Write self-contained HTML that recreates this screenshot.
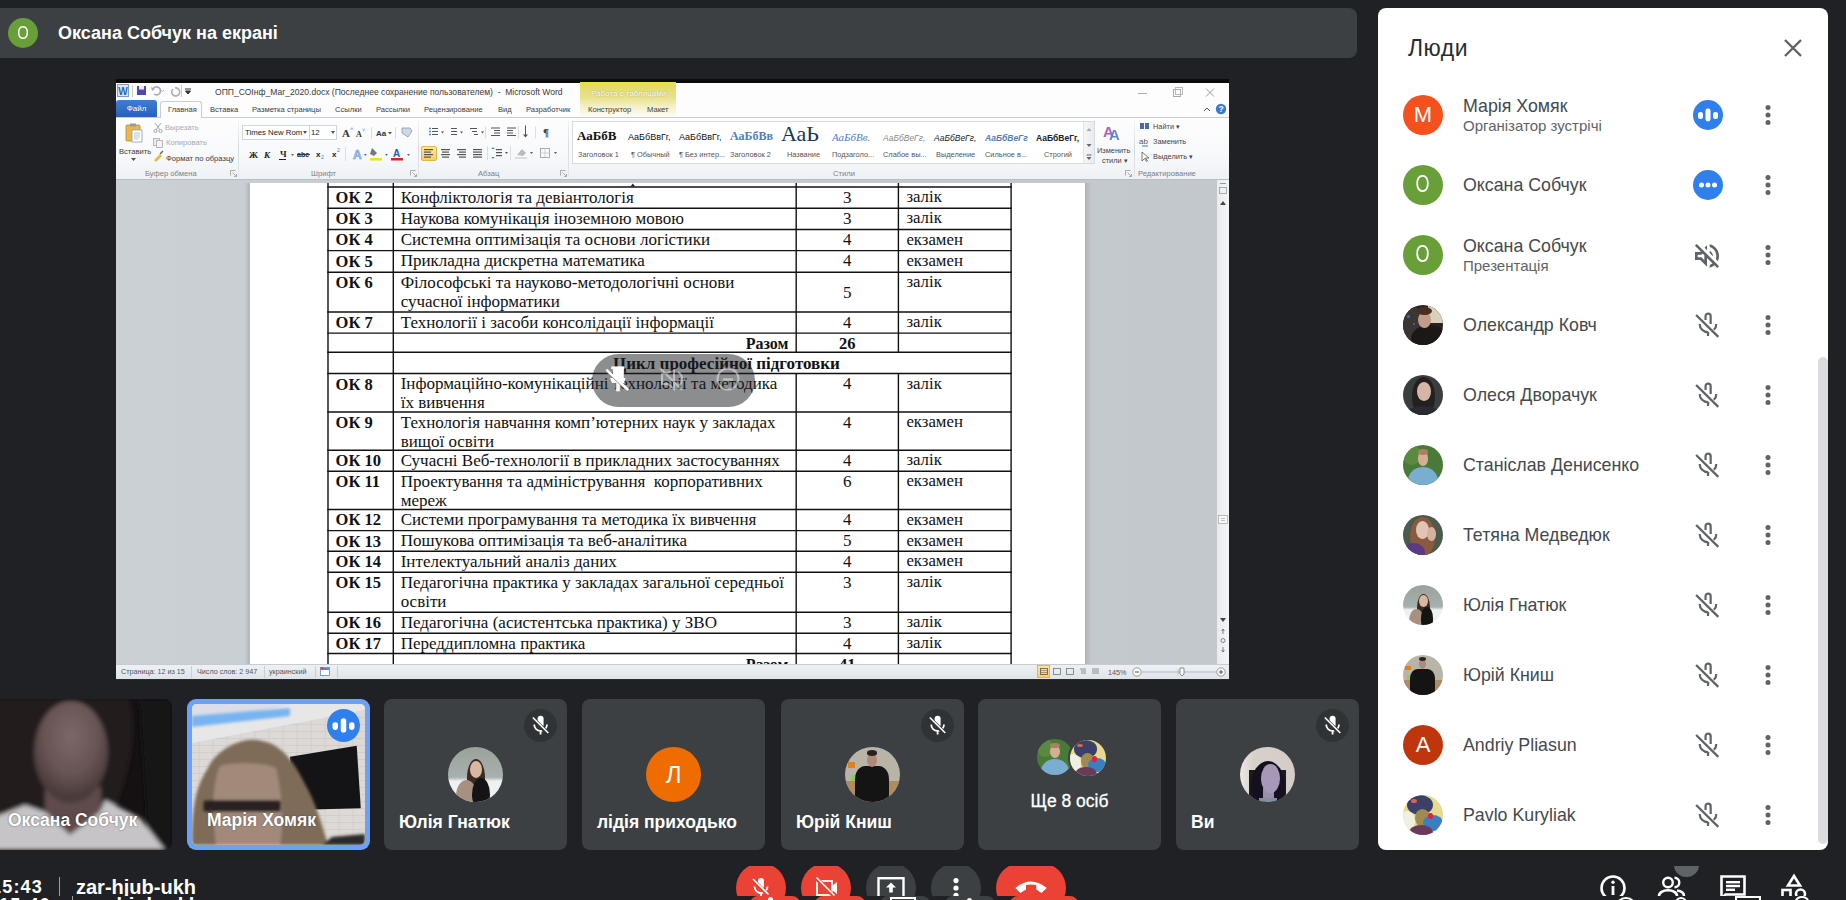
<!DOCTYPE html>
<html><head><meta charset="utf-8">
<style>
*{margin:0;padding:0;box-sizing:border-box}
html,body{width:1846px;height:900px;overflow:hidden;background:#202124;font-family:"Liberation Sans",sans-serif}
body{position:relative}
.a{position:absolute}
.nw{white-space:nowrap}
</style></head><body>
<div class="a" style="left:-10px;top:8px;width:1367px;height:50px;background:#3c4043;border-radius:8px"></div>
<div class="a" style="left:8px;top:18px;width:30px;height:30px;border-radius:50%;background:#689f38;color:#fff;font-size:18px;line-height:30px;text-align:center"><span style="display:inline-block;transform:scale(0.82,1.06)">O</span></div>
<div class="a nw" style="left:58px;top:22px;color:#fff;font-size:18px;font-weight:bold;line-height:22px">Оксана Собчук на екрані</div>
<div class="a" style="left:116px;top:79px;width:1113px;height:600px;background:#c9ced3"></div>
<div class="a" style="left:116px;top:79px;width:1113px;height:4px;background:#0b0b0b"></div>
<div class="a" style="left:116px;top:83px;width:1113px;height:34px;background:#fdfdfd"></div>
<div class="a" style="left:580px;top:82px;width:96px;height:35px;background:linear-gradient(#efe22a 0,#e4da68 10%,#e8e28e 45%,#f4f0c8 70%,#fdfdf8 100%)"></div>
<div class="a nw" style="left:591px;top:88px;font-family:&quot;Liberation Sans&quot;,sans-serif;font-size:8px;line-height:12px;color:#fff;text-shadow:0 0 1.5px rgba(90,90,40,.6)">Работа с таблицами</div>
<svg class="a" style="left:117px;top:84px" width="80" height="14" viewBox="0 0 80 14"><rect x="0.5" y="0.5" width="11" height="12" fill="#dfe8f4" stroke="#7a9cc8"/><text x="1.2" y="11" font-family="Liberation Sans" font-weight="bold" font-size="10" fill="#2a64b8">W</text><line x1="15.5" y1="1" x2="15.5" y2="13" stroke="#ccc"/><rect x="20" y="2" width="9" height="9" fill="#4a4ab0"/><rect x="22" y="2" width="5" height="3.5" fill="#e8e8f8"/><path d="M36 5a4 4 0 1 1 1 5" fill="none" stroke="#aab" stroke-width="1.6"/><path d="M34 3l1 4 3-2z" fill="#aab"/><path d="M44 6l1.5 1.5L47 6" fill="none" stroke="#bbb"/><path d="M58 4a4 4 0 1 1-2 1" fill="none" stroke="#aab" stroke-width="1.6"/><line x1="64.5" y1="1" x2="64.5" y2="13" stroke="#ccc"/><path d="M68 5h6M68.5 7h5l-2.5 3z" stroke="#333" fill="#333" stroke-width="1"/></svg>
<div class="a nw" style="left:215px;top:86px;font-family:&quot;Liberation Sans&quot;,sans-serif;font-size:8.55px;line-height:12px;color:#3a3a3a">ОПП_СОІнф_Маг_2020.docx (Последнее сохранение пользователем)&nbsp; - &nbsp;Microsoft Word</div>
<svg class="a" style="left:1135px;top:86px" width="85" height="14" viewBox="0 0 85 14"><line x1="3" y1="7.5" x2="12" y2="7.5" stroke="#aaa" stroke-width="1"/><rect x="38.5" y="3.5" width="7" height="7" fill="none" stroke="#aaa"/><rect x="40.5" y="1.5" width="7" height="7" fill="none" stroke="#bbb"/><path d="M71 2.5l8 8M79 2.5l-8 8" stroke="#999" stroke-width="1"/></svg>
<div class="a" style="left:116px;top:100px;width:41px;height:17px;background:linear-gradient(#3c7fd4,#2a60b8);border-radius:3px 3px 0 0"></div>
<div class="a nw" style="left:116px;top:103px;font-family:&quot;Liberation Sans&quot;,sans-serif;font-size:8px;line-height:11px;color:#fff;width:41px;text-align:center">Файл</div>
<div class="a" style="left:116px;top:117px;width:1113px;height:1px;background:#c6cdd5"></div>
<div class="a" style="left:160px;top:101px;width:42px;height:17px;background:#fdfdfd;border:1px solid #c6cdd5;border-bottom:none;border-radius:3px 3px 0 0"></div>
<div class="a nw" style="left:168px;top:104px;font-family:&quot;Liberation Sans&quot;,sans-serif;font-size:7.6px;line-height:11px;color:#3c3c3c">Главная</div>
<div class="a nw" style="left:210px;top:104px;font-family:&quot;Liberation Sans&quot;,sans-serif;font-size:7.6px;line-height:11px;color:#3c3c3c">Вставка</div>
<div class="a nw" style="left:252px;top:104px;font-family:&quot;Liberation Sans&quot;,sans-serif;font-size:7.6px;line-height:11px;color:#3c3c3c">Разметка страницы</div>
<div class="a nw" style="left:335px;top:104px;font-family:&quot;Liberation Sans&quot;,sans-serif;font-size:7.6px;line-height:11px;color:#3c3c3c">Ссылки</div>
<div class="a nw" style="left:376px;top:104px;font-family:&quot;Liberation Sans&quot;,sans-serif;font-size:7.6px;line-height:11px;color:#3c3c3c">Рассылки</div>
<div class="a nw" style="left:424px;top:104px;font-family:&quot;Liberation Sans&quot;,sans-serif;font-size:7.6px;line-height:11px;color:#3c3c3c">Рецензирование</div>
<div class="a nw" style="left:498px;top:104px;font-family:&quot;Liberation Sans&quot;,sans-serif;font-size:7.6px;line-height:11px;color:#3c3c3c">Вид</div>
<div class="a nw" style="left:526px;top:104px;font-family:&quot;Liberation Sans&quot;,sans-serif;font-size:7.6px;line-height:11px;color:#3c3c3c">Разработчик</div>
<div class="a nw" style="left:588px;top:104px;font-family:&quot;Liberation Sans&quot;,sans-serif;font-size:7.6px;line-height:11px;color:#3c3c3c">Конструктор</div>
<div class="a nw" style="left:647px;top:104px;font-family:&quot;Liberation Sans&quot;,sans-serif;font-size:7.6px;line-height:11px;color:#3c3c3c">Макет</div>
<svg class="a" style="left:1200px;top:102px" width="28" height="14" viewBox="0 0 28 14"><path d="M4 9l3-3 3 3" fill="none" stroke="#555" stroke-width="1"/><circle cx="21" cy="7" r="5.2" fill="#3a78d0"/><text x="18.6" y="10.2" font-family="Liberation Sans" font-weight="bold" font-size="8.5" fill="#fff">?</text></svg>
<div class="a" style="left:116px;top:118px;width:1113px;height:61px;background:linear-gradient(#fdfdfd 0,#f8f9fb 60%,#eef1f5 100%)"></div>
<div class="a" style="left:116px;top:179px;width:1113px;height:1px;background:#b6bec7"></div>
<div class="a" style="left:238px;top:120px;width:1px;height:57px;background:linear-gradient(#f4f5f7,#d6dbe0 50%,#e4e7eb)"></div>
<div class="a" style="left:418px;top:120px;width:1px;height:57px;background:linear-gradient(#f4f5f7,#d6dbe0 50%,#e4e7eb)"></div>
<div class="a" style="left:568px;top:120px;width:1px;height:57px;background:linear-gradient(#f4f5f7,#d6dbe0 50%,#e4e7eb)"></div>
<div class="a" style="left:1134px;top:120px;width:1px;height:57px;background:linear-gradient(#f4f5f7,#d6dbe0 50%,#e4e7eb)"></div>
<div class="a nw" style="left:145px;top:168px;font-family:&quot;Liberation Sans&quot;,sans-serif;font-size:7.6px;line-height:11px;color:#7a7f85">Буфер обмена</div>
<div class="a nw" style="left:311px;top:168px;font-family:&quot;Liberation Sans&quot;,sans-serif;font-size:7.6px;line-height:11px;color:#7a7f85">Шрифт</div>
<div class="a nw" style="left:478px;top:168px;font-family:&quot;Liberation Sans&quot;,sans-serif;font-size:7.6px;line-height:11px;color:#7a7f85">Абзац</div>
<div class="a nw" style="left:833px;top:168px;font-family:&quot;Liberation Sans&quot;,sans-serif;font-size:7.6px;line-height:11px;color:#7a7f85">Стили</div>
<div class="a nw" style="left:1138px;top:168px;font-family:&quot;Liberation Sans&quot;,sans-serif;font-size:7.6px;line-height:11px;color:#7a7f85">Редактирование</div>
<svg class="a" style="left:230px;top:170px" width="7" height="7" viewBox="0 0 7 7"><path d="M0.5 0.5h5M0.5 0.5v5M2.5 2.5l4 4M4 6.5h2.5V4" fill="none" stroke="#999" stroke-width="0.8"/></svg>
<svg class="a" style="left:410px;top:170px" width="7" height="7" viewBox="0 0 7 7"><path d="M0.5 0.5h5M0.5 0.5v5M2.5 2.5l4 4M4 6.5h2.5V4" fill="none" stroke="#999" stroke-width="0.8"/></svg>
<svg class="a" style="left:560px;top:170px" width="7" height="7" viewBox="0 0 7 7"><path d="M0.5 0.5h5M0.5 0.5v5M2.5 2.5l4 4M4 6.5h2.5V4" fill="none" stroke="#999" stroke-width="0.8"/></svg>
<svg class="a" style="left:1125px;top:170px" width="7" height="7" viewBox="0 0 7 7"><path d="M0.5 0.5h5M0.5 0.5v5M2.5 2.5l4 4M4 6.5h2.5V4" fill="none" stroke="#999" stroke-width="0.8"/></svg>
<svg class="a" style="left:124px;top:122px" width="22" height="22" viewBox="0 0 22 22"><rect x="2" y="3" width="14" height="16" rx="1" fill="#e8b850" stroke="#b88a30" stroke-width="0.8"/><rect x="6" y="1.5" width="6" height="3" fill="#999"/><rect x="8" y="8" width="10" height="12" fill="#fff" stroke="#8aa0b8" stroke-width="0.8"/><path d="M10 11h6M10 13h6M10 15h6M10 17h4" stroke="#9ab" stroke-width="0.7"/></svg>
<div class="a nw" style="left:119px;top:146px;font-family:&quot;Liberation Sans&quot;,sans-serif;font-size:7.6px;line-height:11px;color:#3c3c3c">Вставить</div>
<svg class="a" style="left:131px;top:158px" width="6" height="4"><path d="M0 0h5l-2.5 3z" fill="#555"/></svg>
<svg class="a" style="left:152px;top:122px" width="12" height="40" viewBox="0 0 12 40"><path d="M3 1l5 7M9 1L4 8" stroke="#aaa" stroke-width="1"/><circle cx="3.5" cy="9" r="1.6" fill="none" stroke="#aaa"/><circle cx="8.5" cy="9" r="1.6" fill="none" stroke="#aaa"/><rect x="1.5" y="16.5" width="6" height="7" fill="#eee" stroke="#aaa" stroke-width="0.8"/><rect x="4.5" y="18.5" width="6" height="7" fill="#f4f4f4" stroke="#aaa" stroke-width="0.8"/><path d="M2 38l6-6 2 2-6 6z" fill="#e0c040"/><path d="M8 32l3-3" stroke="#666" stroke-width="1.5"/></svg>
<div class="a nw" style="left:165px;top:122px;font-family:&quot;Liberation Sans&quot;,sans-serif;font-size:7.6px;line-height:11px;color:#a8abb0">Вырезать</div>
<div class="a nw" style="left:166px;top:137px;font-family:&quot;Liberation Sans&quot;,sans-serif;font-size:7.6px;line-height:11px;color:#a8abb0">Копировать</div>
<div class="a nw" style="left:166px;top:153px;font-family:&quot;Liberation Sans&quot;,sans-serif;font-size:7.6px;line-height:11px;color:#3c3c3c">Формат по образцу</div>
<div class="a" style="left:242px;top:125px;width:68px;height:15px;background:#fff;border:1px solid #cfd5dc"></div>
<div class="a" style="left:309px;top:125px;width:28px;height:15px;background:#fff;border:1px solid #cfd5dc"></div>
<div class="a nw" style="left:245px;top:127px;font-family:&quot;Liberation Sans&quot;,sans-serif;font-size:7.8px;line-height:11px;color:#222">Times New Rom</div>
<div class="a nw" style="left:311px;top:127px;font-family:&quot;Liberation Sans&quot;,sans-serif;font-size:7.8px;line-height:11px;color:#222">12</div>
<svg class="a" style="left:303px;top:131px" width="5" height="3"><path d="M0 0h4l-2 3z" fill="#555"/></svg>
<svg class="a" style="left:331px;top:131px" width="5" height="3"><path d="M0 0h4l-2 3z" fill="#555"/></svg>
<svg class="a" style="left:240px;top:124px" width="180" height="40" viewBox="0 0 180 40"><text x="102" y="13" font-family="Liberation Serif" font-weight="bold" font-size="11" fill="#333">A</text><text x="110" y="7" font-size="6" fill="#3a78d0">˄</text><text x="116" y="13" font-family="Liberation Serif" font-weight="bold" font-size="8" fill="#333">A</text><text x="122" y="8" font-size="5" fill="#3a78d0">˅</text><line x1="131.5" y1="3" x2="131.5" y2="15" stroke="#ddd"/><text x="136" y="12" font-family="Liberation Sans" font-weight="bold" font-size="8" fill="#333">Aa</text><path d="M148 8h4l-2 2.5z" fill="#555"/><line x1="155.5" y1="3" x2="155.5" y2="15" stroke="#ddd"/><path d="M162 4h8l2 3-4 6-6-4z" fill="#d0d8e8" stroke="#8898b0" stroke-width="0.8"/><text x="9" y="34" font-family="Liberation Serif" font-weight="bold" font-size="9" fill="#222">Ж</text><text x="24" y="34" font-family="Liberation Serif" font-weight="bold" font-style="italic" font-size="9" fill="#222">К</text><text x="40" y="33" font-family="Liberation Serif" font-weight="bold" font-size="9" fill="#222">Ч</text><line x1="39" y1="35.5" x2="46" y2="35.5" stroke="#222"/><path d="M51 30h3l-1.5 2z" fill="#666"/><text x="57" y="33" font-family="Liberation Sans" font-weight="bold" font-size="7" fill="#222">abc</text><line x1="57" y1="30.5" x2="70" y2="30.5" stroke="#222" stroke-width="0.8"/><text x="76" y="33" font-family="Liberation Sans" font-weight="bold" font-size="8" fill="#222">x</text><text x="81" y="35" font-size="5" fill="#3a78d0">2</text><text x="92" y="33" font-family="Liberation Sans" font-weight="bold" font-size="8" fill="#222">x</text><text x="97" y="28" font-size="5" fill="#3a78d0">2</text><line x1="105.5" y1="23" x2="105.5" y2="37" stroke="#ddd"/><text x="113" y="35" font-family="Liberation Sans" font-weight="bold" font-size="12" fill="#a8c8f0" stroke="#5a90d0" stroke-width="0.5">A</text><path d="M124 30h3l-1.5 2z" fill="#666"/><path d="M132 24l5 5-3 3-4-2z" fill="#777"/><rect x="130" y="34" width="12" height="2.5" fill="#f0e020"/><path d="M145 30h3l-1.5 2z" fill="#666"/><text x="153" y="33" font-family="Liberation Sans" font-weight="bold" font-size="10" fill="#2a58b0">A</text><rect x="151" y="34" width="12" height="2.5" fill="#e02020"/><path d="M167 30h3l-1.5 2z" fill="#666"/></svg>
<div class="a" style="left:421px;top:146px;width:16px;height:15px;background:linear-gradient(#fde89a,#f8d060);border:1px solid #e0b840;border-radius:2px"></div>
<svg class="a" style="left:420px;top:122px" width="150" height="42" viewBox="0 0 150 42"><g transform="translate(0,1.5)"><g fill="#555"><circle cx="10" cy="5" r="0.9" fill="#3a78d0"/><circle cx="10" cy="8" r="0.9" fill="#3a78d0"/><circle cx="10" cy="11" r="0.9" fill="#3a78d0"/><rect x="12" y="4.5" width="6" height="1"/><rect x="12" y="7.5" width="6" height="1"/><rect x="12" y="10.5" width="6" height="1"/><path d="M21 8h3l-1.5 2z"/><rect x="31" y="4.5" width="6" height="1"/><rect x="31" y="7.5" width="6" height="1"/><rect x="31" y="10.5" width="6" height="1"/><path d="M40 8h3l-1.5 2z"/><rect x="50" y="4.5" width="7" height="1"/><rect x="52" y="7.5" width="5" height="1"/><rect x="54" y="10.5" width="4" height="1"/><path d="M61 8h3l-1.5 2z"/><rect x="71" y="4" width="9" height="1"/><rect x="74" y="6.5" width="6" height="1"/><rect x="74" y="9" width="6" height="1"/><rect x="71" y="11.5" width="9" height="1"/><rect x="87" y="4" width="9" height="1"/><rect x="87" y="6.5" width="6" height="1"/><rect x="87" y="9" width="6" height="1"/><rect x="87" y="11.5" width="9" height="1"/><rect x="105" y="2" width="1" height="11"/><path d="M103 11h5l-2.5 3z"/><text x="123" y="12" font-family="Liberation Serif" font-weight="bold" font-size="11" fill="#444">¶</text></g><line x1="65.5" y1="3" x2="65.5" y2="15" stroke="#ddd"/><line x1="98.5" y1="3" x2="98.5" y2="15" stroke="#ddd"/><line x1="115.5" y1="3" x2="115.5" y2="15" stroke="#ddd"/></g><g fill="#555"><rect x="4" y="27" width="9" height="1.2"/><rect x="4" y="29.5" width="7" height="1.2"/><rect x="4" y="32" width="9" height="1.2"/><rect x="4" y="34.5" width="7" height="1.2"/><rect x="21" y="27" width="9" height="1.2"/><rect x="22" y="29.5" width="7" height="1.2"/><rect x="21" y="32" width="9" height="1.2"/><rect x="22" y="34.5" width="7" height="1.2"/><rect x="37" y="27" width="9" height="1.2"/><rect x="39" y="29.5" width="7" height="1.2"/><rect x="37" y="32" width="9" height="1.2"/><rect x="39" y="34.5" width="7" height="1.2"/><rect x="53" y="27" width="9" height="1.2"/><rect x="53" y="29.5" width="9" height="1.2"/><rect x="53" y="32" width="9" height="1.2"/><rect x="53" y="34.5" width="9" height="1.2"/><rect x="76" y="27" width="6" height="1.2"/><rect x="76" y="30" width="6" height="1.2"/><rect x="76" y="33" width="6" height="1.2"/><path d="M73 25l-1.5 2h3zM73 37l-1.5-2h3z" fill="#3a78d0"/><path d="M85 30h3l-1.5 2z"/><path d="M97 33l5-6 4 4-3 3z" fill="#bbb"/><rect x="95" y="35" width="12" height="2" fill="#ddd"/><path d="M110 30h3l-1.5 2z"/><rect x="120.5" y="26.5" width="9" height="9" fill="none" stroke="#999" stroke-width="0.8"/><line x1="125" y1="26.5" x2="125" y2="35.5" stroke="#bbb" stroke-width="0.6"/><line x1="120.5" y1="31" x2="129.5" y2="31" stroke="#bbb" stroke-width="0.6"/><path d="M134 30h3l-1.5 2z"/></g><line x1="67.5" y1="24" x2="67.5" y2="38" stroke="#ddd"/><line x1="90.5" y1="24" x2="90.5" y2="38" stroke="#ddd"/></svg>
<div class="a" style="left:572px;top:121px;width:523px;height:43px;background:#fff;border:1px solid #d6dbe1"></div>
<div class="a" style="left:1083px;top:122px;width:11px;height:41px;background:linear-gradient(90deg,#f4f5f7,#e8ebef);border-left:1px solid #e0e3e7"></div>
<svg class="a" style="left:1085px;top:125px" width="8" height="36"><path d="M1.5 6h5L4 3z" fill="#aaa"/><path d="M1.5 19h5L4 22z" fill="#666"/><line x1="1.5" y1="30" x2="6.5" y2="30" stroke="#666"/><path d="M1.5 32h5L4 35z" fill="#666"/></svg>
<div class="a nw" style="left:577px;top:129px;font-family:&quot;Liberation Serif&quot;;font-weight:bold;font-size:13px;color:#111;line-height:14px">АаБбВ</div>
<div class="a nw" style="left:578px;top:149px;font-family:&quot;Liberation Sans&quot;,sans-serif;font-size:7.4px;line-height:11px;color:#555">Заголовок 1</div>
<div class="a nw" style="left:628px;top:130px;font-family:&quot;Liberation Sans&quot;,sans-serif;font-size:9px;color:#111;line-height:14px">АаБбВвГг,</div>
<div class="a nw" style="left:631px;top:149px;font-family:&quot;Liberation Sans&quot;,sans-serif;font-size:7.4px;line-height:11px;color:#555">¶ Обычный</div>
<div class="a nw" style="left:679px;top:130px;font-family:&quot;Liberation Sans&quot;,sans-serif;font-size:9px;color:#111;line-height:14px">АаБбВвГг,</div>
<div class="a nw" style="left:679px;top:149px;font-family:&quot;Liberation Sans&quot;,sans-serif;font-size:7.4px;line-height:11px;color:#555">¶ Без интер...</div>
<div class="a nw" style="left:730px;top:129px;font-family:&quot;Liberation Serif&quot;;font-weight:bold;font-size:12px;color:#4f81bd;line-height:14px">АаБбВв</div>
<div class="a nw" style="left:730px;top:149px;font-family:&quot;Liberation Sans&quot;,sans-serif;font-size:7.4px;line-height:11px;color:#555">Заголовок 2</div>
<div class="a nw" style="left:781px;top:119px;font-family:&quot;Liberation Serif&quot;;font-size:22px;color:#17365d;line-height:30px">АаЬ</div>
<div class="a nw" style="left:787px;top:149px;font-family:&quot;Liberation Sans&quot;,sans-serif;font-size:7.4px;line-height:11px;color:#555">Название</div>
<div class="a nw" style="left:832px;top:130px;font-family:&quot;Liberation Serif&quot;;font-style:italic;font-size:11px;color:#4f81bd;line-height:14px">АаБбВв.</div>
<div class="a nw" style="left:832px;top:149px;font-family:&quot;Liberation Sans&quot;,sans-serif;font-size:7.4px;line-height:11px;color:#555">Подзаголо...</div>
<div class="a nw" style="left:883px;top:131px;font-family:&quot;Liberation Sans&quot;,sans-serif;font-style:italic;font-size:8.5px;color:#8a8a8a;line-height:14px">АаБбВеГг,</div>
<div class="a nw" style="left:883px;top:149px;font-family:&quot;Liberation Sans&quot;,sans-serif;font-size:7.4px;line-height:11px;color:#555">Слабое вы...</div>
<div class="a nw" style="left:934px;top:131px;font-family:&quot;Liberation Sans&quot;,sans-serif;font-style:italic;font-size:8.5px;color:#222;line-height:14px">АаБбВеГг,</div>
<div class="a nw" style="left:936px;top:149px;font-family:&quot;Liberation Sans&quot;,sans-serif;font-size:7.4px;line-height:11px;color:#555">Выделение</div>
<div class="a nw" style="left:985px;top:131px;font-family:&quot;Liberation Sans&quot;,sans-serif;font-style:italic;font-weight:bold;font-size:8.5px;color:#4f81bd;line-height:14px">АаБбВеГг</div>
<div class="a nw" style="left:985px;top:149px;font-family:&quot;Liberation Sans&quot;,sans-serif;font-size:7.4px;line-height:11px;color:#555">Сильное в...</div>
<div class="a nw" style="left:1036px;top:131px;font-family:&quot;Liberation Sans&quot;,sans-serif;font-weight:bold;font-size:8.5px;color:#222;line-height:14px">АаБбВеГг,</div>
<div class="a nw" style="left:1044px;top:149px;font-family:&quot;Liberation Sans&quot;,sans-serif;font-size:7.4px;line-height:11px;color:#555">Строгий</div>
<svg class="a" style="left:1102px;top:122px" width="22" height="20" viewBox="0 0 22 20"><text x="1" y="15" font-family="Liberation Sans" font-weight="bold" font-size="15" fill="#b060c0">A</text><text x="7" y="18" font-family="Liberation Sans" font-weight="bold" font-size="15" fill="#4a80d0" opacity="0.9">A</text></svg>
<div class="a nw" style="left:1097px;top:146px;font-family:&quot;Liberation Sans&quot;,sans-serif;font-size:7.4px;line-height:10px;color:#444">Изменить</div>
<div class="a nw" style="left:1102px;top:156px;font-family:&quot;Liberation Sans&quot;,sans-serif;font-size:7.4px;line-height:10px;color:#444">стили ▾</div>
<svg class="a" style="left:1139px;top:122px" width="12" height="42" viewBox="0 0 12 42"><rect x="1" y="1" width="4" height="6" fill="#4a6ab0"/><rect x="6" y="1" width="4" height="6" fill="#4a6ab0"/><text x="0" y="22" font-family="Liberation Sans" font-size="8" fill="#555">ab</text><path d="M3 24h6" stroke="#3a78d0"/><path d="M3 30v9l2.5-2.5 2 3 1-0.5-2-3H10z" fill="#fff" stroke="#444" stroke-width="0.7"/></svg>
<div class="a nw" style="left:1153px;top:121px;font-family:&quot;Liberation Sans&quot;,sans-serif;font-size:7.4px;line-height:11px;color:#444">Найти ▾</div>
<div class="a nw" style="left:1153px;top:136px;font-family:&quot;Liberation Sans&quot;,sans-serif;font-size:7.4px;line-height:11px;color:#444">Заменить</div>
<div class="a nw" style="left:1153px;top:151px;font-family:&quot;Liberation Sans&quot;,sans-serif;font-size:7.4px;line-height:11px;color:#444">Выделить ▾</div>
<div class="a" style="left:116px;top:180px;width:1101px;height:484px;background:linear-gradient(90deg,#cbd0d5 0,#c6cbd0 50%,#c3c8cd 100%)"></div>
<div class="a" style="left:244px;top:183px;width:6px;height:481px;background:linear-gradient(90deg,rgba(0,0,0,0),rgba(0,0,0,0.12))"></div>
<div class="a" style="left:1085px;top:183px;width:6px;height:481px;background:linear-gradient(90deg,rgba(0,0,0,0.12),rgba(0,0,0,0))"></div>
<div class="a" style="left:1217px;top:180px;width:12px;height:484px;background:linear-gradient(90deg,#e9ecef,#f4f5f7)"></div>
<svg class="a" style="left:1217px;top:181px" width="12" height="483" viewBox="0 0 12 483"><line x1="3" y1="2.5" x2="9" y2="2.5" stroke="#999"/><rect x="2.5" y="6.5" width="7" height="6" fill="none" stroke="#999" stroke-width="0.8"/><path d="M3 24h6L6 20z" fill="#444"/><rect x="1.5" y="334.5" width="9" height="8" fill="#f8f8f8" stroke="#aaa" stroke-width="0.8"/><path d="M4 337.5h4M4 339.5h4" stroke="#999" stroke-width="0.6"/><path d="M3 437h6L6 441z" fill="#444"/><path d="M6 448v5M4.5 450l1.5-2 1.5 2" fill="none" stroke="#666" stroke-width="0.8"/><circle cx="6" cy="459.5" r="2" fill="none" stroke="#666" stroke-width="0.8"/><path d="M6 466v5M4.5 469l1.5 2 1.5-2" fill="none" stroke="#666" stroke-width="0.8"/></svg>
<div class="a" style="left:250px;top:183px;width:835px;height:481px;background:#fff"></div>
<div class="a" style="left:250px;top:183px;width:835px;height:481px;overflow:hidden">
<svg class="a" style="left:0;top:0" width="835" height="481"><g stroke="#111"><line x1="77.30000000000001" y1="3.90" x2="761.8000000000001" y2="3.90" stroke-width="1.45"/><line x1="77.30000000000001" y1="25.30" x2="761.8000000000001" y2="25.30" stroke-width="1.45"/><line x1="77.30000000000001" y1="46.40" x2="761.8000000000001" y2="46.40" stroke-width="1.45"/><line x1="77.30000000000001" y1="67.60" x2="761.8000000000001" y2="67.60" stroke-width="1.45"/><line x1="77.30000000000001" y1="89.20" x2="761.8000000000001" y2="89.20" stroke-width="1.45"/><line x1="77.30000000000001" y1="129.00" x2="761.8000000000001" y2="129.00" stroke-width="1.45"/><line x1="77.30000000000001" y1="150.10" x2="761.8000000000001" y2="150.10" stroke-width="1.45"/><line x1="77.30000000000001" y1="169.20" x2="761.8000000000001" y2="169.20" stroke-width="1.45"/><line x1="77.30000000000001" y1="190.50" x2="761.8000000000001" y2="190.50" stroke-width="1.45"/><line x1="77.30000000000001" y1="228.90" x2="761.8000000000001" y2="228.90" stroke-width="1.45"/><line x1="77.30000000000001" y1="267.20" x2="761.8000000000001" y2="267.20" stroke-width="1.45"/><line x1="77.30000000000001" y1="288.30" x2="761.8000000000001" y2="288.30" stroke-width="1.45"/><line x1="77.30000000000001" y1="326.40" x2="761.8000000000001" y2="326.40" stroke-width="1.45"/><line x1="77.30000000000001" y1="347.60" x2="761.8000000000001" y2="347.60" stroke-width="1.45"/><line x1="77.30000000000001" y1="368.20" x2="761.8000000000001" y2="368.20" stroke-width="1.45"/><line x1="77.30000000000001" y1="389.30" x2="761.8000000000001" y2="389.30" stroke-width="1.45"/><line x1="77.30000000000001" y1="429.30" x2="761.8000000000001" y2="429.30" stroke-width="1.45"/><line x1="77.30000000000001" y1="450.30" x2="761.8000000000001" y2="450.30" stroke-width="1.45"/><line x1="77.30000000000001" y1="470.50" x2="761.8000000000001" y2="470.50" stroke-width="1.45"/><line x1="78.00" y1="0" x2="78.00" y2="481" stroke-width="1.4"/><line x1="761.10" y1="0" x2="761.10" y2="481" stroke-width="1.4"/><line x1="143.30" y1="0" x2="143.30" y2="481" stroke-width="1.4"/><line x1="546.20" y1="0" x2="546.20" y2="169.2" stroke-width="1.4"/><line x1="546.20" y1="190.5" x2="546.20" y2="481" stroke-width="1.4"/><line x1="648.40" y1="0" x2="648.40" y2="169.2" stroke-width="1.4"/><line x1="648.40" y1="190.5" x2="648.40" y2="481" stroke-width="1.4"/></g></svg>
<div class="a nw" style="left:85.60px;top:4.93px;font-family:&quot;Liberation Serif&quot;,serif;font-size:16.5px;line-height:20px;color:#111;font-weight:bold;">ОК 2</div>
<div class="a nw" style="left:150.70px;top:4.76px;font-family:&quot;Liberation Serif&quot;,serif;font-size:17px;line-height:20px;color:#111;">Конфліктологія та девіантологія</div>
<div class="a nw" style="left:546.20px;top:4.76px;font-family:&quot;Liberation Serif&quot;,serif;font-size:17px;line-height:20px;color:#111;width:102.19999999999993px;text-align:center;">3</div>
<div class="a nw" style="left:656.40px;top:4.03px;font-family:&quot;Liberation Serif&quot;,serif;font-size:16.8px;line-height:20px;color:#111;">залік</div>
<div class="a nw" style="left:85.60px;top:26.33px;font-family:&quot;Liberation Serif&quot;,serif;font-size:16.5px;line-height:20px;color:#111;font-weight:bold;">ОК 3</div>
<div class="a nw" style="left:150.70px;top:26.16px;font-family:&quot;Liberation Serif&quot;,serif;font-size:17px;line-height:20px;color:#111;">Наукова комунікація іноземною мовою</div>
<div class="a nw" style="left:546.20px;top:26.16px;font-family:&quot;Liberation Serif&quot;,serif;font-size:17px;line-height:20px;color:#111;width:102.19999999999993px;text-align:center;">3</div>
<div class="a nw" style="left:656.40px;top:25.43px;font-family:&quot;Liberation Serif&quot;,serif;font-size:16.8px;line-height:20px;color:#111;">залік</div>
<div class="a nw" style="left:85.60px;top:47.43px;font-family:&quot;Liberation Serif&quot;,serif;font-size:16.5px;line-height:20px;color:#111;font-weight:bold;">ОК 4</div>
<div class="a nw" style="left:150.70px;top:47.26px;font-family:&quot;Liberation Serif&quot;,serif;font-size:17px;line-height:20px;color:#111;">Системна оптимізація та основи логістики</div>
<div class="a nw" style="left:546.20px;top:47.26px;font-family:&quot;Liberation Serif&quot;,serif;font-size:17px;line-height:20px;color:#111;width:102.19999999999993px;text-align:center;">4</div>
<div class="a nw" style="left:656.40px;top:46.53px;font-family:&quot;Liberation Serif&quot;,serif;font-size:16.8px;line-height:20px;color:#111;">екзамен</div>
<div class="a nw" style="left:85.60px;top:68.63px;font-family:&quot;Liberation Serif&quot;,serif;font-size:16.5px;line-height:20px;color:#111;font-weight:bold;">ОК 5</div>
<div class="a nw" style="left:150.70px;top:68.46px;font-family:&quot;Liberation Serif&quot;,serif;font-size:17px;line-height:20px;color:#111;">Прикладна дискретна математика</div>
<div class="a nw" style="left:546.20px;top:68.46px;font-family:&quot;Liberation Serif&quot;,serif;font-size:17px;line-height:20px;color:#111;width:102.19999999999993px;text-align:center;">4</div>
<div class="a nw" style="left:656.40px;top:67.73px;font-family:&quot;Liberation Serif&quot;,serif;font-size:16.8px;line-height:20px;color:#111;">екзамен</div>
<div class="a nw" style="left:85.60px;top:90.23px;font-family:&quot;Liberation Serif&quot;,serif;font-size:16.5px;line-height:20px;color:#111;font-weight:bold;">ОК 6</div>
<div class="a nw" style="left:150.70px;top:90.06px;font-family:&quot;Liberation Serif&quot;,serif;font-size:17px;line-height:20px;color:#111;">Філософські та науково-методологічні основи</div>
<div class="a nw" style="left:150.70px;top:108.96px;font-family:&quot;Liberation Serif&quot;,serif;font-size:17px;line-height:20px;color:#111;">сучасної інформатики</div>
<div class="a nw" style="left:546.20px;top:99.51px;font-family:&quot;Liberation Serif&quot;,serif;font-size:17px;line-height:20px;color:#111;width:102.19999999999993px;text-align:center;">5</div>
<div class="a nw" style="left:656.40px;top:89.33px;font-family:&quot;Liberation Serif&quot;,serif;font-size:16.8px;line-height:20px;color:#111;">залік</div>
<div class="a nw" style="left:85.60px;top:130.03px;font-family:&quot;Liberation Serif&quot;,serif;font-size:16.5px;line-height:20px;color:#111;font-weight:bold;">ОК 7</div>
<div class="a nw" style="left:150.70px;top:129.86px;font-family:&quot;Liberation Serif&quot;,serif;font-size:17px;line-height:20px;color:#111;">Технології і засоби консолідації інформації</div>
<div class="a nw" style="left:546.20px;top:129.86px;font-family:&quot;Liberation Serif&quot;,serif;font-size:17px;line-height:20px;color:#111;width:102.19999999999993px;text-align:center;">4</div>
<div class="a nw" style="left:656.40px;top:129.13px;font-family:&quot;Liberation Serif&quot;,serif;font-size:16.8px;line-height:20px;color:#111;">залік</div>
<div class="a nw" style="left:85.60px;top:191.53px;font-family:&quot;Liberation Serif&quot;,serif;font-size:16.5px;line-height:20px;color:#111;font-weight:bold;">ОК 8</div>
<div class="a nw" style="left:150.70px;top:191.36px;font-family:&quot;Liberation Serif&quot;,serif;font-size:17px;line-height:20px;color:#111;">Інформаційно-комунікаційні технології та методика</div>
<div class="a nw" style="left:150.70px;top:210.26px;font-family:&quot;Liberation Serif&quot;,serif;font-size:17px;line-height:20px;color:#111;">їх вивчення</div>
<div class="a nw" style="left:546.20px;top:191.36px;font-family:&quot;Liberation Serif&quot;,serif;font-size:17px;line-height:20px;color:#111;width:102.19999999999993px;text-align:center;">4</div>
<div class="a nw" style="left:656.40px;top:190.63px;font-family:&quot;Liberation Serif&quot;,serif;font-size:16.8px;line-height:20px;color:#111;">залік</div>
<div class="a nw" style="left:85.60px;top:229.93px;font-family:&quot;Liberation Serif&quot;,serif;font-size:16.5px;line-height:20px;color:#111;font-weight:bold;">ОК 9</div>
<div class="a nw" style="left:150.70px;top:229.76px;font-family:&quot;Liberation Serif&quot;,serif;font-size:17px;line-height:20px;color:#111;">Технологія навчання комп’ютерних наук у закладах</div>
<div class="a nw" style="left:150.70px;top:248.66px;font-family:&quot;Liberation Serif&quot;,serif;font-size:17px;line-height:20px;color:#111;">вищої освіти</div>
<div class="a nw" style="left:546.20px;top:229.76px;font-family:&quot;Liberation Serif&quot;,serif;font-size:17px;line-height:20px;color:#111;width:102.19999999999993px;text-align:center;">4</div>
<div class="a nw" style="left:656.40px;top:229.03px;font-family:&quot;Liberation Serif&quot;,serif;font-size:16.8px;line-height:20px;color:#111;">екзамен</div>
<div class="a nw" style="left:85.60px;top:268.23px;font-family:&quot;Liberation Serif&quot;,serif;font-size:16.5px;line-height:20px;color:#111;font-weight:bold;">ОК 10</div>
<div class="a nw" style="left:150.70px;top:268.06px;font-family:&quot;Liberation Serif&quot;,serif;font-size:17px;line-height:20px;color:#111;">Сучасні Веб-технології в прикладних застосуваннях</div>
<div class="a nw" style="left:546.20px;top:268.06px;font-family:&quot;Liberation Serif&quot;,serif;font-size:17px;line-height:20px;color:#111;width:102.19999999999993px;text-align:center;">4</div>
<div class="a nw" style="left:656.40px;top:267.33px;font-family:&quot;Liberation Serif&quot;,serif;font-size:16.8px;line-height:20px;color:#111;">залік</div>
<div class="a nw" style="left:85.60px;top:289.33px;font-family:&quot;Liberation Serif&quot;,serif;font-size:16.5px;line-height:20px;color:#111;font-weight:bold;">ОК 11</div>
<div class="a nw" style="left:150.70px;top:289.16px;font-family:&quot;Liberation Serif&quot;,serif;font-size:17px;line-height:20px;color:#111;">Проектування та адміністрування&nbsp; корпоративних</div>
<div class="a nw" style="left:150.70px;top:308.06px;font-family:&quot;Liberation Serif&quot;,serif;font-size:17px;line-height:20px;color:#111;">мереж</div>
<div class="a nw" style="left:546.20px;top:289.16px;font-family:&quot;Liberation Serif&quot;,serif;font-size:17px;line-height:20px;color:#111;width:102.19999999999993px;text-align:center;">6</div>
<div class="a nw" style="left:656.40px;top:288.43px;font-family:&quot;Liberation Serif&quot;,serif;font-size:16.8px;line-height:20px;color:#111;">екзамен</div>
<div class="a nw" style="left:85.60px;top:327.43px;font-family:&quot;Liberation Serif&quot;,serif;font-size:16.5px;line-height:20px;color:#111;font-weight:bold;">ОК 12</div>
<div class="a nw" style="left:150.70px;top:327.26px;font-family:&quot;Liberation Serif&quot;,serif;font-size:17px;line-height:20px;color:#111;">Системи програмування та методика їх вивчення</div>
<div class="a nw" style="left:546.20px;top:327.26px;font-family:&quot;Liberation Serif&quot;,serif;font-size:17px;line-height:20px;color:#111;width:102.19999999999993px;text-align:center;">4</div>
<div class="a nw" style="left:656.40px;top:326.53px;font-family:&quot;Liberation Serif&quot;,serif;font-size:16.8px;line-height:20px;color:#111;">екзамен</div>
<div class="a nw" style="left:85.60px;top:348.63px;font-family:&quot;Liberation Serif&quot;,serif;font-size:16.5px;line-height:20px;color:#111;font-weight:bold;">ОК 13</div>
<div class="a nw" style="left:150.70px;top:348.46px;font-family:&quot;Liberation Serif&quot;,serif;font-size:17px;line-height:20px;color:#111;">Пошукова оптимізація та веб-аналітика</div>
<div class="a nw" style="left:546.20px;top:348.46px;font-family:&quot;Liberation Serif&quot;,serif;font-size:17px;line-height:20px;color:#111;width:102.19999999999993px;text-align:center;">5</div>
<div class="a nw" style="left:656.40px;top:347.73px;font-family:&quot;Liberation Serif&quot;,serif;font-size:16.8px;line-height:20px;color:#111;">екзамен</div>
<div class="a nw" style="left:85.60px;top:369.23px;font-family:&quot;Liberation Serif&quot;,serif;font-size:16.5px;line-height:20px;color:#111;font-weight:bold;">ОК 14</div>
<div class="a nw" style="left:150.70px;top:369.06px;font-family:&quot;Liberation Serif&quot;,serif;font-size:17px;line-height:20px;color:#111;">Інтелектуальний аналіз даних</div>
<div class="a nw" style="left:546.20px;top:369.06px;font-family:&quot;Liberation Serif&quot;,serif;font-size:17px;line-height:20px;color:#111;width:102.19999999999993px;text-align:center;">4</div>
<div class="a nw" style="left:656.40px;top:368.33px;font-family:&quot;Liberation Serif&quot;,serif;font-size:16.8px;line-height:20px;color:#111;">екзамен</div>
<div class="a nw" style="left:85.60px;top:390.33px;font-family:&quot;Liberation Serif&quot;,serif;font-size:16.5px;line-height:20px;color:#111;font-weight:bold;">ОК 15</div>
<div class="a nw" style="left:150.70px;top:390.16px;font-family:&quot;Liberation Serif&quot;,serif;font-size:17px;line-height:20px;color:#111;">Педагогічна практика у закладах загальної середньої</div>
<div class="a nw" style="left:150.70px;top:409.06px;font-family:&quot;Liberation Serif&quot;,serif;font-size:17px;line-height:20px;color:#111;">освіти</div>
<div class="a nw" style="left:546.20px;top:390.16px;font-family:&quot;Liberation Serif&quot;,serif;font-size:17px;line-height:20px;color:#111;width:102.19999999999993px;text-align:center;">3</div>
<div class="a nw" style="left:656.40px;top:389.43px;font-family:&quot;Liberation Serif&quot;,serif;font-size:16.8px;line-height:20px;color:#111;">залік</div>
<div class="a nw" style="left:85.60px;top:430.33px;font-family:&quot;Liberation Serif&quot;,serif;font-size:16.5px;line-height:20px;color:#111;font-weight:bold;">ОК 16</div>
<div class="a nw" style="left:150.70px;top:430.16px;font-family:&quot;Liberation Serif&quot;,serif;font-size:17px;line-height:20px;color:#111;">Педагогічна (асистентська практика) у ЗВО</div>
<div class="a nw" style="left:546.20px;top:430.16px;font-family:&quot;Liberation Serif&quot;,serif;font-size:17px;line-height:20px;color:#111;width:102.19999999999993px;text-align:center;">3</div>
<div class="a nw" style="left:656.40px;top:429.43px;font-family:&quot;Liberation Serif&quot;,serif;font-size:16.8px;line-height:20px;color:#111;">залік</div>
<div class="a nw" style="left:85.60px;top:451.33px;font-family:&quot;Liberation Serif&quot;,serif;font-size:16.5px;line-height:20px;color:#111;font-weight:bold;">ОК 17</div>
<div class="a nw" style="left:150.70px;top:451.16px;font-family:&quot;Liberation Serif&quot;,serif;font-size:17px;line-height:20px;color:#111;">Переддипломна практика</div>
<div class="a nw" style="left:546.20px;top:451.16px;font-family:&quot;Liberation Serif&quot;,serif;font-size:17px;line-height:20px;color:#111;width:102.19999999999993px;text-align:center;">4</div>
<div class="a nw" style="left:656.40px;top:450.43px;font-family:&quot;Liberation Serif&quot;,serif;font-size:16.8px;line-height:20px;color:#111;">залік</div>
<div class="a nw" style="left:143.30px;top:151.30px;font-family:&quot;Liberation Serif&quot;,serif;font-size:16px;line-height:20px;color:#111;font-weight:bold;width:395.09999999999997px;text-align:right;">Разом</div>
<div class="a nw" style="left:546.20px;top:151.13px;font-family:&quot;Liberation Serif&quot;,serif;font-size:16.5px;line-height:20px;color:#111;font-weight:bold;width:102.19999999999993px;text-align:center;">26</div>
<div class="a nw" style="left:363.00px;top:171.26px;font-family:&quot;Liberation Serif&quot;,serif;font-size:17px;line-height:20px;color:#111;font-weight:bold;">Цикл професійної підготовки</div>
<svg class="a" style="left:380px;top:0" width="6" height="4"><path d="M0.5 3.5L2.8 0.5L5.2 3.5z" fill="#222"/></svg>
<div class="a nw" style="left:143.30px;top:471.70px;font-family:&quot;Liberation Serif&quot;,serif;font-size:16px;line-height:20px;color:#111;font-weight:bold;width:395.09999999999997px;text-align:right;">Разом</div>
<div class="a nw" style="left:546.20px;top:471.53px;font-family:&quot;Liberation Serif&quot;,serif;font-size:16.5px;line-height:20px;color:#111;font-weight:bold;width:102.19999999999993px;text-align:center;">41</div>
</div>
<div class="a" style="left:592px;top:353.7px;width:163px;height:53px;background:rgba(28,30,33,0.505);border-radius:26.5px"></div>
<svg class="a" style="left:600px;top:362px" width="150" height="34" viewBox="0 0 150 34"><g fill="#fff"><rect x="11.3" y="4.4" width="13" height="2.8"/><rect x="13" y="7" width="10.8" height="9.2"/><path d="M10 16H25.6L24 21H12z"/><rect x="16.2" y="21" width="3.6" height="8.3"/></g><line x1="6" y1="8.6" x2="27.8" y2="29" stroke="#8c8d8f" stroke-width="2"/><line x1="6.4" y1="7.6" x2="28.2" y2="28" stroke="#fff" stroke-width="2.6"/><g opacity="0.45" fill="none" stroke="#fff" stroke-width="2"><path d="M62 12v10h6l6 5V9z"/><path d="M78 10a8 8 0 0 1 0 14"/><line x1="60" y1="6" x2="82" y2="28"/><circle cx="128" cy="17" r="10.5"/><line x1="123" y1="17.5" x2="133" y2="17.5" stroke-width="2.4"/></g></svg>
<div class="a" style="left:116px;top:664px;width:1113px;height:15px;background:linear-gradient(#eef1f4,#dfe4e9);border-top:1px solid #c5ccd3"></div>
<div class="a nw" style="left:121px;top:666px;font-family:&quot;Liberation Sans&quot;,sans-serif;font-size:7.2px;line-height:11px;color:#505860">Страница: 12 из 15</div>
<div class="a nw" style="left:197px;top:666px;font-family:&quot;Liberation Sans&quot;,sans-serif;font-size:7.2px;line-height:11px;color:#505860">Число слов: 2 947</div>
<div class="a nw" style="left:269px;top:666px;font-family:&quot;Liberation Sans&quot;,sans-serif;font-size:7.2px;line-height:11px;color:#505860">украинский</div>
<div class="a" style="left:191px;top:666px;width:1px;height:12px;background:#c8cfd6"></div>
<div class="a" style="left:264px;top:666px;width:1px;height:12px;background:#c8cfd6"></div>
<div class="a" style="left:315px;top:666px;width:1px;height:12px;background:#c8cfd6"></div>
<div class="a" style="left:337px;top:666px;width:1px;height:12px;background:#c8cfd6"></div>
<svg class="a" style="left:320px;top:667px" width="11" height="10"><rect x="0.5" y="0.5" width="9" height="8" fill="#fff" stroke="#5a88c8" stroke-width="0.8"/><rect x="1" y="1" width="8" height="2" fill="#5a88c8"/><circle cx="2" cy="1.5" r="1.5" fill="#e04040"/></svg>
<div class="a" style="left:1037px;top:665px;width:13px;height:13px;background:linear-gradient(#fde89a,#f8d060);border:1px solid #e0b840"></div>
<svg class="a" style="left:1038px;top:666px" width="190" height="12" viewBox="0 0 190 12"><rect x="2.5" y="2.5" width="7" height="6" fill="none" stroke="#555" stroke-width="0.8"/><path d="M3 4.5h6M3 6.5h6" stroke="#555" stroke-width="0.5"/><rect x="15.5" y="2.5" width="7" height="6" fill="none" stroke="#777" stroke-width="0.8"/><rect x="28.5" y="2.5" width="7" height="6" fill="none" stroke="#777" stroke-width="0.8"/><path d="M42 3h6M43 5h5M43 7h5" stroke="#777" stroke-width="0.8"/><path d="M54 3h7M54 5h7M54 7h7" stroke="#777" stroke-width="0.8"/><text x="70" y="9" font-family="Liberation Sans" font-size="7.2" fill="#555">145%</text><circle cx="99" cy="6" r="4.2" fill="#f8f8f8" stroke="#888" stroke-width="0.8"/><line x1="97" y1="6" x2="101" y2="6" stroke="#555"/><line x1="104" y1="6" x2="178" y2="6" stroke="#aab" stroke-width="0.8"/><line x1="140" y1="3" x2="140" y2="9" stroke="#aaa" stroke-width="0.6"/><path d="M142 2h4v6l-2 2-2-2z" fill="#fafafa" stroke="#666" stroke-width="0.7"/><circle cx="183" cy="6" r="4.2" fill="#f8f8f8" stroke="#888" stroke-width="0.8"/><path d="M181 6h4M183 4v4" stroke="#555"/></svg>
<div class="a" style="left:116px;top:679px;width:1113px;height:1px;background:#2a2a2a"></div>
<div class="a" style="left:1378px;top:8px;width:450px;height:842px;background:#fff;border-radius:8px;overflow:hidden"></div>
<div class="a nw" style="left:1408px;top:34px;font-size:23px;line-height:28px;color:#2a2b2e;letter-spacing:0.5px">Люди</div>
<svg class="a" style="left:1781px;top:36px" width="24" height="24" viewBox="0 0 24 24"><path d="M4 4L20 20M20 4L4 20" stroke="#5f6368" stroke-width="2.4"/></svg>
<div class="a" style="left:1818px;top:357px;width:10px;height:487px;background:#dadce0;border-radius:5px"></div>
<div class="a" style="left:1403px;top:95px;width:40px;height:40px;border-radius:50%;background:#f4511e;color:#fff;font-size:22px;line-height:40px;text-align:center">M</div>
<div class="a nw" style="left:1463px;top:95px;font-size:17.8px;line-height:22px;color:#45494c">Марія Хомяк</div>
<div class="a nw" style="left:1463px;top:116px;font-size:15px;line-height:19px;color:#5f6368">Організатор зустрічі</div>
<svg class="a" style="left:1693px;top:100px" width="30" height="30" viewBox="0 0 30 30"><circle cx="15" cy="15" r="15" fill="#2f80ed"/><rect x="5" y="12" width="5" height="7" rx="2.2" fill="#fff"/><rect x="12.5" y="8.4" width="5" height="13" rx="2.4" fill="#fff"/><rect x="20" y="12" width="5" height="7" rx="2.2" fill="#fff"/></svg>
<svg class="a" style="left:1763px;top:103px" width="10" height="24" viewBox="0 0 10 24"><circle cx="5" cy="4.5" r="2.5" fill="#5f6368"/><circle cx="5" cy="12" r="2.5" fill="#5f6368"/><circle cx="5" cy="19.5" r="2.5" fill="#5f6368"/></svg>
<div class="a" style="left:1403px;top:165px;width:40px;height:40px;border-radius:50%;background:#689f38;color:#fff;font-size:22px;line-height:40px;text-align:center"><span style="display:inline-block;transform:scale(0.82,1.06)">O</span></div>
<div class="a nw" style="left:1463px;top:174px;font-size:17.8px;line-height:22px;color:#45494c">Оксана Собчук</div>
<svg class="a" style="left:1693px;top:170px" width="30" height="30" viewBox="0 0 30 30"><circle cx="15" cy="15" r="15" fill="#2f80ed"/><circle cx="8.5" cy="15" r="2.5" fill="#fff"/><circle cx="15" cy="15" r="2.5" fill="#fff"/><circle cx="21.5" cy="15" r="2.5" fill="#fff"/></svg>
<svg class="a" style="left:1763px;top:173px" width="10" height="24" viewBox="0 0 10 24"><circle cx="5" cy="4.5" r="2.5" fill="#5f6368"/><circle cx="5" cy="12" r="2.5" fill="#5f6368"/><circle cx="5" cy="19.5" r="2.5" fill="#5f6368"/></svg>
<div class="a" style="left:1403px;top:235px;width:40px;height:40px;border-radius:50%;background:#689f38;color:#fff;font-size:22px;line-height:40px;text-align:center"><span style="display:inline-block;transform:scale(0.82,1.06)">O</span></div>
<div class="a nw" style="left:1463px;top:235px;font-size:17.8px;line-height:22px;color:#45494c">Оксана Собчук</div>
<div class="a nw" style="left:1463px;top:256px;font-size:15px;line-height:19px;color:#5f6368">Презентація</div>
<svg class="a" style="left:1691px;top:240px" width="32" height="32" viewBox="0 0 24 24"><path fill="#5f6368" d="M4.34 2.93L2.93 4.34 7.29 8.7 7 9H3v6h4l5 5v-6.59l4.18 4.18c-.65.49-1.38.88-2.18 1.11v2.06c1.34-.3 2.57-.92 3.61-1.75l2.05 2.05 1.41-1.41L4.34 2.93zM10 15.17L7.83 13H5v-2h2.83l.88-.88L10 11.41v3.76zM19 12c0 .82-.15 1.61-.41 2.34l1.53 1.53c.56-1.17.88-2.48.88-3.87 0-4.28-3-7.86-7-8.77v2.06c2.89.86 5 3.54 5 6.71zm-7-8l-1.88 1.88L12 7.76zm4.5 8c0-1.77-1.02-3.29-2.5-4.03v1.79l2.48 2.48c.01-.08.02-.16.02-.24z"/></svg>
<svg class="a" style="left:1763px;top:243px" width="10" height="24" viewBox="0 0 10 24"><circle cx="5" cy="4.5" r="2.5" fill="#5f6368"/><circle cx="5" cy="12" r="2.5" fill="#5f6368"/><circle cx="5" cy="19.5" r="2.5" fill="#5f6368"/></svg>
<div class="a" style="left:1403px;top:305px;width:40px;height:40px;border-radius:50%;overflow:hidden;background:#2a2220;"><div class="a" style="left:-5%;top:5%;width:60%;height:85%;background:#3a3634;border-radius:50%;"></div><div class="a" style="left:62%;top:0%;width:40%;height:45%;background:#d8d0bc;"></div><div class="a" style="left:10%;top:25%;width:8%;height:8%;background:#4a6ab0;border-radius:50%;"></div><div class="a" style="left:25%;top:45%;width:6%;height:6%;background:#4a6ab0;border-radius:50%;"></div><div class="a" style="left:20%;top:50%;width:90%;height:70%;background:#1c1818;border-radius:50%;"></div><div class="a" style="left:38%;top:18%;width:32%;height:40%;background:#c49a88;border-radius:50%;"></div><div class="a" style="left:36%;top:6%;width:36%;height:20%;background:#4a2e22;border-radius:50%;"></div></div>
<div class="a nw" style="left:1463px;top:314px;font-size:17.8px;line-height:22px;color:#45494c">Олександр Ковч</div>
<svg class="a" style="left:1692px;top:310px" width="30" height="30" viewBox="0 0 30 30">
<g fill="none" stroke="#5f6368" stroke-width="2.2">
<path d="M13.55 10V6.15a2.55 2.55 0 0 1 5.1 0V14"/>
<path d="M7.7 13.9a8.3 8.3 0 0 0 16.6 0"/>
<path d="M16 22v4"/>
</g>
<line x1="3.6" y1="5.4" x2="25.8" y2="27.3" stroke="#fff" stroke-width="5.2"/>
<line x1="4.1" y1="5" x2="26.3" y2="26.9" stroke="#5f6368" stroke-width="2.3"/>
</svg>
<svg class="a" style="left:1763px;top:313px" width="10" height="24" viewBox="0 0 10 24"><circle cx="5" cy="4.5" r="2.5" fill="#5f6368"/><circle cx="5" cy="12" r="2.5" fill="#5f6368"/><circle cx="5" cy="19.5" r="2.5" fill="#5f6368"/></svg>
<div class="a" style="left:1403px;top:375px;width:40px;height:40px;border-radius:50%;overflow:hidden;background:#3a3e3c;"><div class="a" style="left:22%;top:4%;width:58%;height:100%;background:#242020;border-radius:50%;"></div><div class="a" style="left:35%;top:18%;width:34%;height:48%;background:#d6b4a6;border-radius:50%;"></div><div class="a" style="left:10%;top:78%;width:80%;height:40%;background:#2a2a32;border-radius:50%;"></div></div>
<div class="a nw" style="left:1463px;top:384px;font-size:17.8px;line-height:22px;color:#45494c">Олеся Дворачук</div>
<svg class="a" style="left:1692px;top:380px" width="30" height="30" viewBox="0 0 30 30">
<g fill="none" stroke="#5f6368" stroke-width="2.2">
<path d="M13.55 10V6.15a2.55 2.55 0 0 1 5.1 0V14"/>
<path d="M7.7 13.9a8.3 8.3 0 0 0 16.6 0"/>
<path d="M16 22v4"/>
</g>
<line x1="3.6" y1="5.4" x2="25.8" y2="27.3" stroke="#fff" stroke-width="5.2"/>
<line x1="4.1" y1="5" x2="26.3" y2="26.9" stroke="#5f6368" stroke-width="2.3"/>
</svg>
<svg class="a" style="left:1763px;top:383px" width="10" height="24" viewBox="0 0 10 24"><circle cx="5" cy="4.5" r="2.5" fill="#5f6368"/><circle cx="5" cy="12" r="2.5" fill="#5f6368"/><circle cx="5" cy="19.5" r="2.5" fill="#5f6368"/></svg>
<div class="a" style="left:1403px;top:445px;width:40px;height:40px;border-radius:50%;overflow:hidden;background:#4a7a38;"><div class="a" style="left:0%;top:0%;width:45%;height:50%;background:#5a8a40;border-radius:50%;"></div><div class="a" style="left:12%;top:55%;width:76%;height:70%;background:#7aaed0;border-radius:50%;"></div><div class="a" style="left:37%;top:16%;width:26%;height:36%;background:#d6ae96;border-radius:50%;"></div><div class="a" style="left:37%;top:10%;width:26%;height:14%;background:#a88260;border-radius:50%;"></div></div>
<div class="a nw" style="left:1463px;top:454px;font-size:17.8px;line-height:22px;color:#45494c">Станіслав Денисенко</div>
<svg class="a" style="left:1692px;top:450px" width="30" height="30" viewBox="0 0 30 30">
<g fill="none" stroke="#5f6368" stroke-width="2.2">
<path d="M13.55 10V6.15a2.55 2.55 0 0 1 5.1 0V14"/>
<path d="M7.7 13.9a8.3 8.3 0 0 0 16.6 0"/>
<path d="M16 22v4"/>
</g>
<line x1="3.6" y1="5.4" x2="25.8" y2="27.3" stroke="#fff" stroke-width="5.2"/>
<line x1="4.1" y1="5" x2="26.3" y2="26.9" stroke="#5f6368" stroke-width="2.3"/>
</svg>
<svg class="a" style="left:1763px;top:453px" width="10" height="24" viewBox="0 0 10 24"><circle cx="5" cy="4.5" r="2.5" fill="#5f6368"/><circle cx="5" cy="12" r="2.5" fill="#5f6368"/><circle cx="5" cy="19.5" r="2.5" fill="#5f6368"/></svg>
<div class="a" style="left:1403px;top:515px;width:40px;height:40px;border-radius:50%;overflow:hidden;background:#4a5a4c;"><div class="a" style="left:18%;top:4%;width:62%;height:100%;background:#8a5a40;border-radius:50%;"></div><div class="a" style="left:33%;top:14%;width:32%;height:46%;background:#e2c4b4;border-radius:50%;"></div><div class="a" style="left:0%;top:70%;width:55%;height:50%;background:#5a3a80;border-radius:50%;"></div><div class="a" style="left:60%;top:30%;width:22%;height:34%;background:#d8b0a0;border-radius:50%;"></div></div>
<div class="a nw" style="left:1463px;top:524px;font-size:17.8px;line-height:22px;color:#45494c">Тетяна Медведюк</div>
<svg class="a" style="left:1692px;top:520px" width="30" height="30" viewBox="0 0 30 30">
<g fill="none" stroke="#5f6368" stroke-width="2.2">
<path d="M13.55 10V6.15a2.55 2.55 0 0 1 5.1 0V14"/>
<path d="M7.7 13.9a8.3 8.3 0 0 0 16.6 0"/>
<path d="M16 22v4"/>
</g>
<line x1="3.6" y1="5.4" x2="25.8" y2="27.3" stroke="#fff" stroke-width="5.2"/>
<line x1="4.1" y1="5" x2="26.3" y2="26.9" stroke="#5f6368" stroke-width="2.3"/>
</svg>
<svg class="a" style="left:1763px;top:523px" width="10" height="24" viewBox="0 0 10 24"><circle cx="5" cy="4.5" r="2.5" fill="#5f6368"/><circle cx="5" cy="12" r="2.5" fill="#5f6368"/><circle cx="5" cy="19.5" r="2.5" fill="#5f6368"/></svg>
<div class="a" style="left:1403px;top:585px;width:40px;height:40px;border-radius:50%;overflow:hidden;background:linear-gradient(#9aa29a 0,#a8b0b0 55%,#eef0f2 62%,#eef0f2 100%);"><div class="a" style="left:34%;top:22%;width:34%;height:70%;background:#3a2a22;border-radius:50%;"></div><div class="a" style="left:40%;top:26%;width:22%;height:30%;background:#d8b8a0;border-radius:50%;"></div><div class="a" style="left:15%;top:60%;width:38%;height:60%;background:#a89080;border-radius:50%;"></div><div class="a" style="left:44%;top:56%;width:32%;height:60%;background:#141414;border-radius:50%;"></div></div>
<div class="a nw" style="left:1463px;top:594px;font-size:17.8px;line-height:22px;color:#45494c">Юлія Гнатюк</div>
<svg class="a" style="left:1692px;top:590px" width="30" height="30" viewBox="0 0 30 30">
<g fill="none" stroke="#5f6368" stroke-width="2.2">
<path d="M13.55 10V6.15a2.55 2.55 0 0 1 5.1 0V14"/>
<path d="M7.7 13.9a8.3 8.3 0 0 0 16.6 0"/>
<path d="M16 22v4"/>
</g>
<line x1="3.6" y1="5.4" x2="25.8" y2="27.3" stroke="#fff" stroke-width="5.2"/>
<line x1="4.1" y1="5" x2="26.3" y2="26.9" stroke="#5f6368" stroke-width="2.3"/>
</svg>
<svg class="a" style="left:1763px;top:593px" width="10" height="24" viewBox="0 0 10 24"><circle cx="5" cy="4.5" r="2.5" fill="#5f6368"/><circle cx="5" cy="12" r="2.5" fill="#5f6368"/><circle cx="5" cy="19.5" r="2.5" fill="#5f6368"/></svg>
<div class="a" style="left:1403px;top:655px;width:40px;height:40px;border-radius:50%;overflow:hidden;background:#b8b4a8;"><div class="a" style="left:0%;top:62%;width:100%;height:40%;background:#b08a60;"></div><div class="a" style="left:5%;top:28%;width:14%;height:10%;background:#e08020;"></div><div class="a" style="left:10%;top:50%;width:16%;height:12%;background:#90d040;"></div><div class="a" style="left:18%;top:34%;width:62%;height:80%;background:#141414;border-radius:30% 30% 0 0;"></div><div class="a" style="left:40%;top:10%;width:18%;height:26%;background:#b08a78;border-radius:50%;"></div><div class="a" style="left:40%;top:6%;width:18%;height:10%;background:#2a2020;border-radius:50%;"></div></div>
<div class="a nw" style="left:1463px;top:664px;font-size:17.8px;line-height:22px;color:#45494c">Юрій Книш</div>
<svg class="a" style="left:1692px;top:660px" width="30" height="30" viewBox="0 0 30 30">
<g fill="none" stroke="#5f6368" stroke-width="2.2">
<path d="M13.55 10V6.15a2.55 2.55 0 0 1 5.1 0V14"/>
<path d="M7.7 13.9a8.3 8.3 0 0 0 16.6 0"/>
<path d="M16 22v4"/>
</g>
<line x1="3.6" y1="5.4" x2="25.8" y2="27.3" stroke="#fff" stroke-width="5.2"/>
<line x1="4.1" y1="5" x2="26.3" y2="26.9" stroke="#5f6368" stroke-width="2.3"/>
</svg>
<svg class="a" style="left:1763px;top:663px" width="10" height="24" viewBox="0 0 10 24"><circle cx="5" cy="4.5" r="2.5" fill="#5f6368"/><circle cx="5" cy="12" r="2.5" fill="#5f6368"/><circle cx="5" cy="19.5" r="2.5" fill="#5f6368"/></svg>
<div class="a" style="left:1403px;top:725px;width:40px;height:40px;border-radius:50%;background:#bf360c;color:#fff;font-size:22px;line-height:40px;text-align:center">A</div>
<div class="a nw" style="left:1463px;top:734px;font-size:17.8px;line-height:22px;color:#45494c">Andriy Pliasun</div>
<svg class="a" style="left:1692px;top:730px" width="30" height="30" viewBox="0 0 30 30">
<g fill="none" stroke="#5f6368" stroke-width="2.2">
<path d="M13.55 10V6.15a2.55 2.55 0 0 1 5.1 0V14"/>
<path d="M7.7 13.9a8.3 8.3 0 0 0 16.6 0"/>
<path d="M16 22v4"/>
</g>
<line x1="3.6" y1="5.4" x2="25.8" y2="27.3" stroke="#fff" stroke-width="5.2"/>
<line x1="4.1" y1="5" x2="26.3" y2="26.9" stroke="#5f6368" stroke-width="2.3"/>
</svg>
<svg class="a" style="left:1763px;top:733px" width="10" height="24" viewBox="0 0 10 24"><circle cx="5" cy="4.5" r="2.5" fill="#5f6368"/><circle cx="5" cy="12" r="2.5" fill="#5f6368"/><circle cx="5" cy="19.5" r="2.5" fill="#5f6368"/></svg>
<div class="a" style="left:1403px;top:795px;width:40px;height:40px;border-radius:50%;overflow:hidden;background:#e8d890;"><div class="a" style="left:-10%;top:40%;width:40%;height:50%;background:#f0f0e0;border-radius:50%;"></div><div class="a" style="left:10%;top:0%;width:65%;height:50%;background:#3a4068;border-radius:50%;"></div><div class="a" style="left:20%;top:10%;width:15%;height:10%;background:#e06050;border-radius:50%;"></div><div class="a" style="left:30%;top:35%;width:38%;height:45%;background:#a08a50;border-radius:50%;"></div><div class="a" style="left:50%;top:50%;width:50%;height:40%;background:#3a80c0;border-radius:50%;"></div><div class="a" style="left:15%;top:75%;width:60%;height:40%;background:#6a3a5a;border-radius:50%;"></div><div class="a" style="left:62%;top:45%;width:12%;height:16%;background:#e02040;border-radius:50%;"></div></div>
<div class="a nw" style="left:1463px;top:804px;font-size:17.8px;line-height:22px;color:#45494c">Pavlo Kuryliak</div>
<svg class="a" style="left:1692px;top:800px" width="30" height="30" viewBox="0 0 30 30">
<g fill="none" stroke="#5f6368" stroke-width="2.2">
<path d="M13.55 10V6.15a2.55 2.55 0 0 1 5.1 0V14"/>
<path d="M7.7 13.9a8.3 8.3 0 0 0 16.6 0"/>
<path d="M16 22v4"/>
</g>
<line x1="3.6" y1="5.4" x2="25.8" y2="27.3" stroke="#fff" stroke-width="5.2"/>
<line x1="4.1" y1="5" x2="26.3" y2="26.9" stroke="#5f6368" stroke-width="2.3"/>
</svg>
<svg class="a" style="left:1763px;top:803px" width="10" height="24" viewBox="0 0 10 24"><circle cx="5" cy="4.5" r="2.5" fill="#5f6368"/><circle cx="5" cy="12" r="2.5" fill="#5f6368"/><circle cx="5" cy="19.5" r="2.5" fill="#5f6368"/></svg>
<div class="a" style="left:-11px;top:699px;width:183px;height:151px;border-radius:8px;overflow:hidden;background:#151112">
<svg width="183" height="151" viewBox="0 0 183 151">
<defs><filter id="bl1" x="-20%" y="-20%" width="140%" height="140%"><feGaussianBlur stdDeviation="2"/></filter>
<radialGradient id="fc1" cx="50%" cy="35%" r="60%"><stop offset="0" stop-color="#7c6868"/><stop offset="0.6" stop-color="#685454"/><stop offset="1" stop-color="#4a3a3a"/></radialGradient></defs>
<g filter="url(#bl1)">
<path d="M0 0H140C150 30 140 70 130 100L120 120H0z" fill="#221a1a"/>
<path d="M150 0H183V151H160z" fill="#181314"/>
<rect x="56" y="88" width="56" height="52" fill="#5e4c4c"/>
<ellipse cx="82" cy="53" rx="37" ry="51" fill="url(#fc1)"/>
<path d="M0 118L11 116L36 106L56 113L81 136L111 113L116 101L151 119L176 151H0z" fill="#c6c4c6"/>
</g>
</svg>
</div>
<div class="a nw" style="left:8px;top:808.5px;color:#fff;font-size:17.5px;font-weight:bold;line-height:22px;text-shadow:0 0 2px rgba(0,0,0,.5)">Оксана Собчук</div>
<div class="a" style="left:187px;top:699px;width:183px;height:151px;border-radius:9px;overflow:hidden;background:#6ea0f5">
<div class="a" style="left:5px;top:5px;width:173px;height:141px;border-radius:5px;overflow:hidden;background:#d8d4d2">
<svg width="173" height="141" viewBox="0 0 173 141">
<defs><filter id="bl2" x="-10%" y="-10%" width="120%" height="120%"><feGaussianBlur stdDeviation="1.6"/></filter>
<pattern id="brick" width="14" height="7" patternUnits="userSpaceOnUse"><rect width="14" height="7" fill="#dcd9d6"/><path d="M0 6.5h14M7 0v6.5" stroke="#d0ccc8" stroke-width="0.8"/></pattern></defs>
<rect width="173" height="141" fill="url(#brick)"/>
<path d="M0 0H173V6L0 39z" fill="#d6d5da"/>
<path d="M0 21L98 0H173V6L0 39z" fill="#e8e7e8"/>
<path d="M0 0H100L0 21z" fill="#dcdde6"/>
<path d="M0 12L98 4V12L0 23z" fill="#78b4f0" filter="url(#bl2)"/>
<path d="M98 52.7L164.7 41.8L168.8 104.3L99.7 106z" fill="#141416"/>
<g filter="url(#bl2)">
<path d="M56 36C40 38 22 50 16 64C6 80 0 95 0 141H136C130 120 122 95 114 82C106 66 96 48 80 40C72 37 64 35 56 36z" fill="#7e6c58"/>
<path d="M28 62C40 58 70 58 84 64C90 90 92 120 88 141H24C20 110 20 80 28 62z" fill="#a28a7a"/>
<rect x="11" y="96" width="78" height="12" rx="3" fill="#2a2224"/>
<path d="M140 133L173 130V141H130z" fill="#2a2a2a"/>
</g>
</svg>
</div></div>
<svg class="a" style="left:327px;top:709px" width="33" height="33" viewBox="0 0 30 30"><circle cx="15" cy="15" r="15" fill="#2f80ed"/><rect x="5" y="12" width="5" height="7" rx="2.2" fill="#fff"/><rect x="12.5" y="8.4" width="5" height="13" rx="2.4" fill="#fff"/><rect x="20" y="12" width="5" height="7" rx="2.2" fill="#fff"/></svg>
<div class="a nw" style="left:207px;top:808.5px;color:#fff;font-size:17.5px;font-weight:bold;line-height:22px;text-shadow:0 0 2px rgba(0,0,0,.4)">Марія Хомяк</div>
<div class="a" style="left:384px;top:699px;width:183px;height:151px;border-radius:8px;background:#3c4043"></div>
<div class="a" style="left:448px;top:747px;width:55px;height:55px;border-radius:50%;overflow:hidden;background:linear-gradient(#9aa29a 0,#a8b0b0 55%,#eef0f2 62%,#eef0f2 100%);"><div class="a" style="left:34%;top:22%;width:34%;height:70%;background:#3a2a22;border-radius:50%;"></div><div class="a" style="left:40%;top:26%;width:22%;height:30%;background:#d8b8a0;border-radius:50%;"></div><div class="a" style="left:15%;top:60%;width:38%;height:60%;background:#a89080;border-radius:50%;"></div><div class="a" style="left:44%;top:56%;width:32%;height:60%;background:#141414;border-radius:50%;"></div></div>
<div class="a nw" style="left:399px;top:810.5px;color:#fff;font-size:17.5px;font-weight:bold;line-height:22px">Юлія Гнатюк</div>
<svg class="a" style="left:524px;top:709px" width="33" height="33" viewBox="0 0 33 33"><circle cx="16.5" cy="16.5" r="16.5" fill="#303336"/>
<rect x="13.6" y="6.8" width="6" height="12" rx="3" fill="#fff"/>
<path d="M10.2 15.5a6.4 6.4 0 0 0 12.8 0" fill="none" stroke="#fff" stroke-width="1.8"/>
<path d="M16.6 22v3.5" stroke="#fff" stroke-width="1.8"/>
<line x1="8.3" y1="9" x2="23.8" y2="24.5" stroke="#303336" stroke-width="4"/>
<line x1="8.8" y1="8.5" x2="24.3" y2="24" stroke="#fff" stroke-width="1.6"/>
</svg>
<div class="a" style="left:582px;top:699px;width:183px;height:151px;border-radius:8px;background:#3c4043"></div>
<div class="a" style="left:646px;top:747px;width:55px;height:55px;border-radius:50%;background:#ef6c00;color:#fff;font-size:24px;line-height:55px;text-align:center">Л</div>
<div class="a nw" style="left:597px;top:810.5px;color:#fff;font-size:17.5px;font-weight:bold;line-height:22px">лідія приходько</div>
<div class="a" style="left:781px;top:699px;width:183px;height:151px;border-radius:8px;background:#3c4043"></div>
<div class="a" style="left:845px;top:747px;width:55px;height:55px;border-radius:50%;overflow:hidden;background:#b8b4a8;"><div class="a" style="left:0%;top:62%;width:100%;height:40%;background:#b08a60;"></div><div class="a" style="left:5%;top:28%;width:14%;height:10%;background:#e08020;"></div><div class="a" style="left:10%;top:50%;width:16%;height:12%;background:#90d040;"></div><div class="a" style="left:18%;top:34%;width:62%;height:80%;background:#141414;border-radius:30% 30% 0 0;"></div><div class="a" style="left:40%;top:10%;width:18%;height:26%;background:#b08a78;border-radius:50%;"></div><div class="a" style="left:40%;top:6%;width:18%;height:10%;background:#2a2020;border-radius:50%;"></div></div>
<div class="a nw" style="left:796px;top:810.5px;color:#fff;font-size:17.5px;font-weight:bold;line-height:22px">Юрій Книш</div>
<svg class="a" style="left:921px;top:709px" width="33" height="33" viewBox="0 0 33 33"><circle cx="16.5" cy="16.5" r="16.5" fill="#303336"/>
<rect x="13.6" y="6.8" width="6" height="12" rx="3" fill="#fff"/>
<path d="M10.2 15.5a6.4 6.4 0 0 0 12.8 0" fill="none" stroke="#fff" stroke-width="1.8"/>
<path d="M16.6 22v3.5" stroke="#fff" stroke-width="1.8"/>
<line x1="8.3" y1="9" x2="23.8" y2="24.5" stroke="#303336" stroke-width="4"/>
<line x1="8.8" y1="8.5" x2="24.3" y2="24" stroke="#fff" stroke-width="1.6"/>
</svg>
<div class="a" style="left:978px;top:699px;width:183px;height:151px;border-radius:8px;background:#3c4043"></div>
<div class="a" style="left:1037px;top:739px;width:36px;height:36px;border-radius:50%;overflow:hidden;background:#4a7a38;"><div class="a" style="left:0%;top:0%;width:45%;height:50%;background:#5a8a40;border-radius:50%;"></div><div class="a" style="left:12%;top:55%;width:76%;height:70%;background:#7aaed0;border-radius:50%;"></div><div class="a" style="left:37%;top:16%;width:26%;height:36%;background:#d6ae96;border-radius:50%;"></div><div class="a" style="left:37%;top:10%;width:26%;height:14%;background:#a88260;border-radius:50%;"></div></div>
<div class="a" style="left:1068px;top:738px;width:39px;height:39px;border-radius:50%;background:#3c4043"></div>
<div class="a" style="left:1070px;top:740px;width:36px;height:36px;border-radius:50%;overflow:hidden;background:#e8d890;"><div class="a" style="left:-10%;top:40%;width:40%;height:50%;background:#f0f0e0;border-radius:50%;"></div><div class="a" style="left:10%;top:0%;width:65%;height:50%;background:#3a4068;border-radius:50%;"></div><div class="a" style="left:20%;top:10%;width:15%;height:10%;background:#e06050;border-radius:50%;"></div><div class="a" style="left:30%;top:35%;width:38%;height:45%;background:#a08a50;border-radius:50%;"></div><div class="a" style="left:50%;top:50%;width:50%;height:40%;background:#3a80c0;border-radius:50%;"></div><div class="a" style="left:15%;top:75%;width:60%;height:40%;background:#6a3a5a;border-radius:50%;"></div><div class="a" style="left:62%;top:45%;width:12%;height:16%;background:#e02040;border-radius:50%;"></div></div>
<div class="a nw" style="left:978px;width:183px;text-align:center;top:790px;color:#fff;font-size:17.5px;line-height:22px;-webkit-text-stroke:0.3px #fff">Ще 8 осіб</div>
<div class="a" style="left:1176px;top:699px;width:183px;height:151px;border-radius:8px;background:#3c4043"></div>
<div class="a" style="left:1240px;top:747px;width:55px;height:55px;border-radius:50%;overflow:hidden;background:linear-gradient(90deg,#ece8e4 0,#d8d0ca 25%,#d4ccc6 100%);"><div class="a" style="left:16%;top:41%;width:68%;height:70%;background:#1c1a1a;"></div><div class="a" style="left:20%;top:26%;width:62%;height:90%;background:#151020;border-radius:50%;"></div><div class="a" style="left:42%;top:74%;width:20%;height:22%;background:#9a8ea8;"></div><div class="a" style="left:38%;top:31%;width:34%;height:52%;background:#a898b8;border-radius:50%;"></div><div class="a" style="left:34%;top:92%;width:34%;height:10%;background:#8090a0;"></div></div>
<div class="a nw" style="left:1191px;top:810.5px;color:#fff;font-size:17.5px;font-weight:bold;line-height:22px">Ви</div>
<svg class="a" style="left:1316px;top:709px" width="33" height="33" viewBox="0 0 33 33"><circle cx="16.5" cy="16.5" r="16.5" fill="#303336"/>
<rect x="13.6" y="6.8" width="6" height="12" rx="3" fill="#fff"/>
<path d="M10.2 15.5a6.4 6.4 0 0 0 12.8 0" fill="none" stroke="#fff" stroke-width="1.8"/>
<path d="M16.6 22v3.5" stroke="#fff" stroke-width="1.8"/>
<line x1="8.3" y1="9" x2="23.8" y2="24.5" stroke="#303336" stroke-width="4"/>
<line x1="8.8" y1="8.5" x2="24.3" y2="24" stroke="#fff" stroke-width="1.6"/>
</svg>
<div class="a nw" style="left:-9px;top:877px;color:#fff;font-size:18px;font-weight:bold;line-height:20px;letter-spacing:1.2px">15:43</div>
<div class="a" style="left:59px;top:877px;width:1px;height:19px;background:#9aa0a6"></div>
<div class="a nw" style="left:76px;top:877px;color:#fff;font-size:20px;font-weight:bold;line-height:20px">zar-hjub-ukh</div>
<div class="a" style="left:0;top:866px;width:1846px;height:34px;overflow:hidden">
<div class="a" style="left:736px;top:-3px;width:50px;height:50px;border-radius:25px;background:#ea4335"></div>
<div class="a" style="left:801px;top:-3px;width:50px;height:50px;border-radius:25px;background:#ea4335"></div>
<div class="a" style="left:866px;top:-3px;width:50px;height:50px;border-radius:25px;background:#3c4043"></div>
<div class="a" style="left:931px;top:-3px;width:50px;height:50px;border-radius:25px;background:#3c4043"></div>
<div class="a" style="left:996px;top:-3px;width:70px;height:50px;border-radius:25px;background:#ea4335"></div>
</div>
<svg class="a" style="left:749px;top:876px" width="24" height="24" viewBox="0 0 24 24"><rect x="9" y="2" width="6" height="11" rx="3" fill="#fff"/>
<path d="M5.5 10.5a6.5 6.5 0 0 0 13 0" fill="none" stroke="#fff" stroke-width="1.8"/><path d="M12 17v4" stroke="#fff" stroke-width="1.8"/>
<line x1="3.5" y1="3.5" x2="19" y2="19" stroke="#ea4335" stroke-width="4"/><line x1="4" y1="3" x2="19.5" y2="18.5" stroke="#fff" stroke-width="1.6"/></svg>
<svg class="a" style="left:814px;top:876px" width="26" height="24" viewBox="0 0 26 24"><rect x="3" y="5" width="15" height="14" fill="none" stroke="#fff" stroke-width="1.8"/><path d="M18 10l5-4v12l-5-4z" fill="#fff"/>
<line x1="2" y1="2" x2="20" y2="20" stroke="#ea4335" stroke-width="4"/><line x1="2.5" y1="1.5" x2="20.5" y2="19.5" stroke="#fff" stroke-width="1.6"/></svg>
<svg class="a" style="left:876px;top:876px" width="30" height="24" viewBox="0 0 30 24"><rect x="2.5" y="2.2" width="25" height="22" fill="none" stroke="#fff" stroke-width="2.4"/><path d="M15 6.5l-5 5h3.2v5h3.6v-5H20z" fill="#fff"/></svg>
<svg class="a" style="left:951px;top:872px" width="10" height="28" viewBox="0 0 10 28"><circle cx="5" cy="8.6" r="2.6" fill="#fff"/><circle cx="5" cy="16" r="2.6" fill="#fff"/><circle cx="5" cy="23.4" r="2.6" fill="#fff"/></svg>
<svg class="a" style="left:1013px;top:878px" width="36" height="18" viewBox="0 0 36 18"><path d="M2.3 10Q18 -3 33.8 10L28.5 15L23.3 11.5V7Q18 6.2 13 7V11.5L7.5 15Z" fill="#fff"/></svg>
<svg class="a" style="left:1598px;top:873px" width="30" height="27" viewBox="0 0 30 27"><circle cx="15" cy="15" r="11.5" fill="none" stroke="#fff" stroke-width="2.6"/><rect x="13.6" y="13" width="2.8" height="9" fill="#fff"/><circle cx="15" cy="9.3" r="1.7" fill="#fff"/></svg>
<svg class="a" style="left:1657px;top:875px" width="34" height="25" viewBox="0 0 34 25"><circle cx="11" cy="7.5" r="4.8" fill="none" stroke="#fff" stroke-width="2.4"/><path d="M17.5 2.7a4.8 4.8 0 0 1 0 9.6" fill="none" stroke="#fff" stroke-width="2.4"/><path d="M2 21c0-3.5 4-5.8 9-5.8s9 2.3 9 5.8" fill="none" stroke="#fff" stroke-width="2.6"/><path d="M20 15.5c4 .5 7 2.5 7 5.5" fill="none" stroke="#fff" stroke-width="2.6"/></svg>
<div class="a" style="left:1674px;top:853px;width:25px;height:24px;border-radius:50%;background:#5f6368"></div>
<div class="a" style="left:1674px;top:850px;width:25px;height:16px;background:#202124"></div>
<div class="a" style="left:1674px;top:866px;width:25px;height:4px;overflow:hidden"><div class="a nw" style="left:0;top:-10px;width:25px;text-align:center;color:#fff;font-size:11px;font-weight:bold;line-height:13px">10</div></div>
<svg class="a" style="left:1718px;top:873px" width="30" height="27" viewBox="0 0 30 27"><path d="M3.5 3.5h23v18h-19l-4 4z" fill="none" stroke="#fff" stroke-width="2.6"/><rect x="8" y="8" width="14" height="2.4" fill="#fff"/><rect x="8" y="11.8" width="14" height="2.4" fill="#fff"/><rect x="8" y="15.6" width="9" height="2.4" fill="#fff"/></svg>
<svg class="a" style="left:1779px;top:873px" width="30" height="27" viewBox="0 0 30 27"><path d="M15 3l6 9.5H9z" fill="none" stroke="#fff" stroke-width="2.6"/><rect x="3.5" y="17" width="8" height="8" fill="none" stroke="#fff" stroke-width="2.6"/><circle cx="21.5" cy="21" r="4.5" fill="none" stroke="#fff" stroke-width="2.6"/></svg>
<div class="a" style="left:0;top:896px;width:1846px;height:4px;overflow:hidden;background:#202124">
<div class="a" style="left:750px;top:0;width:50px;height:10px;background:#ea4335;border-radius:8px 8px 0 0"></div>
<div class="a" style="left:815px;top:0;width:50px;height:10px;background:#ea4335;border-radius:8px 8px 0 0"></div>
<div class="a" style="left:880px;top:0;width:50px;height:10px;background:#3c4043;border-radius:8px 8px 0 0"></div>
<div class="a" style="left:945px;top:0;width:50px;height:10px;background:#3c4043;border-radius:8px 8px 0 0"></div>
<div class="a" style="left:1010px;top:0;width:68px;height:10px;background:#ea4335;border-radius:8px 8px 0 0"></div>
<div class="a" style="left:890px;top:1px;width:26px;height:3px;border:2px solid #fff;border-bottom:none"></div>
<div class="a" style="left:967px;top:2px;width:5px;height:5px;border-radius:50%;background:#fff"></div>
<div class="a" style="left:768px;top:1px;width:5px;height:5px;border-radius:50%;background:#fff"></div>
<div class="a nw" style="left:-1px;top:-1.5px;color:#fff;font-size:18px;font-weight:bold;line-height:20px;letter-spacing:1.2px">15:40</div>
<div class="a" style="left:72px;top:0;width:1px;height:4px;background:#9aa0a6"></div>
<div class="a nw" style="left:81px;top:-1px;color:#fff;font-size:20px;font-weight:bold;line-height:20px">zar-hjub-ukh</div>
<div class="a" style="left:1615px;top:1px;width:22px;height:22px;border-radius:50%;border:2.4px solid #fff"></div>
<div class="a" style="left:1675px;top:1px;width:12px;height:12px;border-radius:50%;border:2.4px solid #fff"></div>
<div class="a" style="left:1735px;top:0;width:26px;height:20px;border:2.4px solid #fff"></div>
<div class="a" style="left:1795px;top:0;width:14px;height:10px;border:2.4px solid #fff;border-radius:50%"></div>
</div>
</body></html>
